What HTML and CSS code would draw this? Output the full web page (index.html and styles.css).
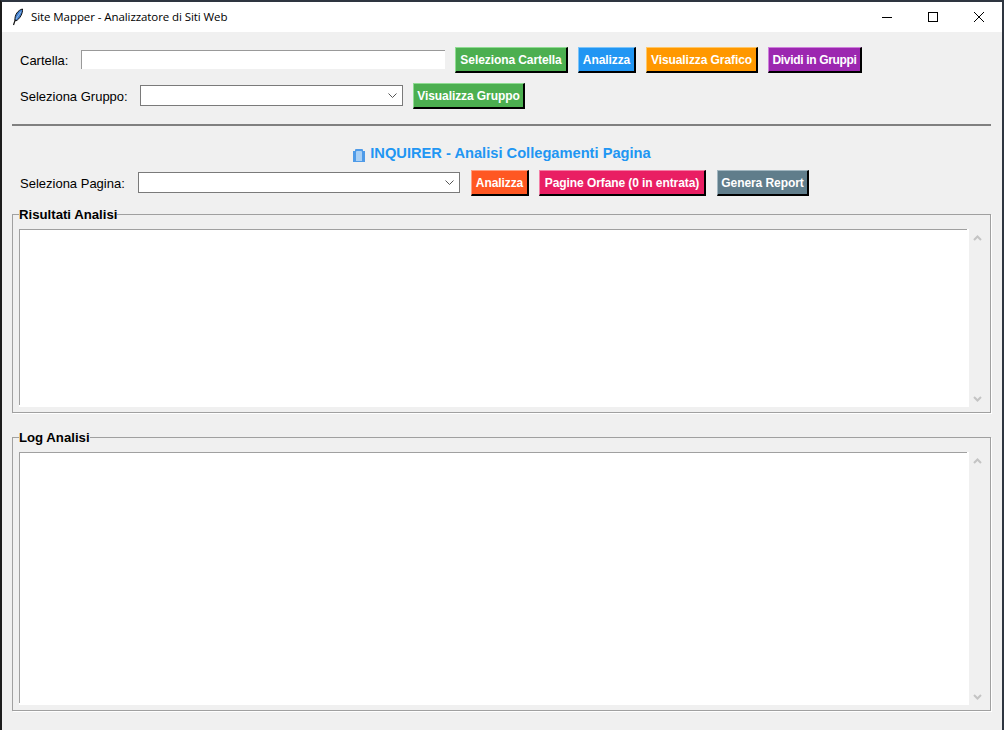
FILE: index.html
```html
<!DOCTYPE html>
<html lang="it">
<head>
<meta charset="utf-8">
<title>Site Mapper - Analizzatore di Siti Web</title>
<link rel="stylesheet" href="styles.css">
</head>
<body>
<div class="window">
  <header class="titlebar">
    <svg class="feather" width="12" height="18" viewBox="0 0 12 18"><path d="M1.5 17 L3.5 11" stroke="#111" stroke-width="1.2" fill="none"/><path d="M3 12 C2.5 7 6 2 10.5 1 C11 5 8 11 3.8 13 Z" fill="#3f7fd0" stroke="#111" stroke-width="1"/><path d="M4 11 L9 3.5" stroke="#bcd6f2" stroke-width=".7" fill="none"/></svg>
    <span class="title">Site Mapper - Analizzatore di Siti Web</span>
    <div class="controls">
      <svg width="46" height="30" viewBox="0 0 46 30"><path d="M18 15.5 H28" stroke="#000"/></svg>
      <svg width="46" height="30" viewBox="0 0 46 30"><rect x="18.5" y="10.5" width="9" height="9" fill="none" stroke="#000"/></svg>
      <svg width="46" height="30" viewBox="0 0 46 30"><path d="M18 10 L28 20 M28 10 L18 20" stroke="#000" fill="none"/></svg>
    </div>
  </header>
  <main class="content">
    <div class="row row-folder">
      <label class="label label-folder">Cartella:</label>
      <input class="entry" type="text">
      <button class="btn green btn-folder">Seleziona Cartella</button>
      <button class="btn blue btn-an">Analizza</button>
      <button class="btn orange btn-graph">Visualizza Grafico</button>
      <button class="btn purple btn-split">Dividi in Gruppi</button>
    </div>
    <div class="row row-group">
      <label class="label label-group">Seleziona Gruppo:</label>
      <div class="combo combo-group"><svg width="9" height="5" viewBox="0 0 9 5"><path d="M.5 .5 L4.5 4.5 L8.5 .5" fill="none" stroke="#555"/></svg></div>
      <button class="btn green btn-view">Visualizza Gruppo</button>
    </div>
    <hr class="sep">
    <h1 class="heading">
      <svg class="book" width="12" height="13" viewBox="0 0 12 13"><path d="M0 2 H2 V1 Q2 0 3 0 H9 Q10 0 10 1 V2 H12 V13 H0 Z" fill="#4f9be8"/><path d="M3 3 Q3 2 4 2 H8 Q9 2 9 3 V12 H3 Z" fill="#a9d0f5"/></svg>
      <span>INQUIRER - Analisi Collegamenti Pagina</span>
    </h1>
    <div class="row row-page">
      <label class="label label-page">Seleziona Pagina:</label>
      <div class="combo combo-page"><svg width="9" height="5" viewBox="0 0 9 5"><path d="M.5 .5 L4.5 4.5 L8.5 .5" fill="none" stroke="#555"/></svg></div>
      <button class="btn red btn-an2">Analizza</button>
      <button class="btn pink btn-orphan">Pagine Orfane (0 in entrata)</button>
      <button class="btn slate btn-report">Genera Report</button>
    </div>
    <fieldset class="group group-results">
      <legend>Risultati Analisi</legend>
      <div class="pane">
        <div class="text"></div>
        <div class="scroll">
          <svg width="9" height="6" viewBox="0 0 9 6"><path d="M1 5 L4.5 1.5 L8 5" fill="none" stroke="#c4c4c4" stroke-width="2"/></svg>
          <svg width="9" height="6" viewBox="0 0 9 6"><path d="M1 1 L4.5 4.5 L8 1" fill="none" stroke="#c4c4c4" stroke-width="2"/></svg>
        </div>
      </div>
    </fieldset>
    <fieldset class="group group-log">
      <legend>Log Analisi</legend>
      <div class="pane">
        <div class="text"></div>
        <div class="scroll">
          <svg width="9" height="6" viewBox="0 0 9 6"><path d="M1 5 L4.5 1.5 L8 5" fill="none" stroke="#c4c4c4" stroke-width="2"/></svg>
          <svg width="9" height="6" viewBox="0 0 9 6"><path d="M1 1 L4.5 4.5 L8 1" fill="none" stroke="#c4c4c4" stroke-width="2"/></svg>
        </div>
      </div>
    </fieldset>
  </main>
</div>
</body>
</html>
```
FILE: styles.css
```css
* { box-sizing: border-box; }
html, body { margin: 0; padding: 0; }
body { width: 1004px; height: 730px; overflow: hidden; font-family: "Liberation Sans", Arial, sans-serif; }

.window {
  width: 1004px; height: 730px;
  display: flex; flex-direction: column;
  background: #f0f0f0;
  border-top: 2px solid #2e3540;
  border-right: 2px solid #2e3540;
  border-left: 2px solid #1c1c1c;
}

.titlebar { height: 30px; flex: none; background: #fff; display: flex; align-items: center; }
.feather { margin-left: 10px; }
.title { margin-left: 7px; font: 11.5px/16px "Open Sans", "Noto Sans", sans-serif; color: #000; letter-spacing: -.08px; }
.controls { margin-left: auto; display: flex; padding-right: 0; }
.controls svg { display: block; }

.content { flex: 1; padding: 15px 11px 0 10px; }

.row { display: flex; align-items: center; height: 26px; padding-left: 8px; }
.row-group { margin-top: 10px; }
.row-page { margin-top: 9px; }

.label { font-size: 13px; line-height: 16px; color: #000; margin-top: 2px; }
.label-folder { width: 61px; }
.label-group { width: 120px; }
.label-page { width: 118px; }

.entry {
  width: 364px; height: 19px; padding: 0; margin-top: -1px;
  border: 0; outline: 0;
  background:
    linear-gradient(#999, #999) no-repeat 0 0 / 100% 1px,
    linear-gradient(#999, #999) no-repeat 0 0 / 1px 100%,
    #fff;
}

.combo {
  height: 21px; margin-top: -1px; background: #fff; border: 1px solid #7a7a7a;
  display: flex; align-items: center; justify-content: flex-end; padding-right: 5px;
}
.combo-group { width: 263px; }
.combo-page { width: 322px; margin-right: 1px; }

.btn {
  height: 26px; padding: 0; color: #fff; cursor: pointer;
  font: bold 12px/14px "Liberation Sans", Arial, sans-serif;
  letter-spacing: -.08px;
  border-style: solid; border-width: 1px 2px 2px 1px;
  border-right-color: #000; border-bottom-color: #000;
  margin-left: 10px;
}
.btn-folder { width: 113px; }
.btn-an { width: 58px; }
.btn-graph { width: 112px; }
.btn-split { width: 94px; letter-spacing: -.33px; }
.btn-view { width: 112px; }
.btn-an2 { width: 58px; }
.btn-orphan { width: 167px; }
.btn-report { width: 92px; margin-left: 11px; }

.green { background: #4caf50; border-top-color: #8fdc92; border-left-color: #8fdc92; }
.blue { background: #2196f3; border-top-color: #7cc4f9; border-left-color: #7cc4f9; }
.orange { background: #ff9800; border-top-color: #ffc766; border-left-color: #ffc766; }
.purple { background: #9c27b0; border-top-color: #cf7fdc; border-left-color: #cf7fdc; }
.red { background: #ff5722; border-top-color: #ff9c7e; border-left-color: #ff9c7e; }
.pink { background: #e91e63; border-top-color: #f47fa6; border-left-color: #f47fa6; }
.slate { background: #607d8b; border-top-color: #a2b6c0; border-left-color: #a2b6c0; }

.sep { height: 2px; margin: 15px 0 0 0; border: 0; background: #808080; }

.heading {
  margin: 19px 0 0; height: 16px;
  display: flex; align-items: center; justify-content: center;
  font-size: 14.67px; line-height: 16px; font-weight: bold; color: #2196f3;
  padding-left: 1px;
}
.book { margin-right: 5px; margin-top: 5px; }

.group {
  margin: 0; padding: 7px 5px 5px 6px; min-width: 0;
  border: 1px solid #a0a0a0;
  box-shadow: 1px 1px 0 #fff;
}
.group legend {
  margin-left: 0; padding: 0;
  font-size: 13.2px; line-height: 15px; font-weight: bold; color: #000;
}
.group-results { margin-top: 11px; height: 206px; }
.group-log { margin-top: 17px; height: 281px; }

.pane { display: flex; height: 100%; }
.text {
  flex: 1;
  background:
    linear-gradient(#a0a0a0, #a0a0a0) no-repeat 0 0 / calc(100% - 2px) 1px,
    linear-gradient(#a0a0a0, #a0a0a0) no-repeat 0 0 / 1px calc(100% - 2px),
    #fff;
}
.scroll {
  width: 16px; flex: none;
  display: flex; flex-direction: column; justify-content: space-between; align-items: center;
  padding: 6px 0 5px;
}
.scroll svg { display: block; }
```
